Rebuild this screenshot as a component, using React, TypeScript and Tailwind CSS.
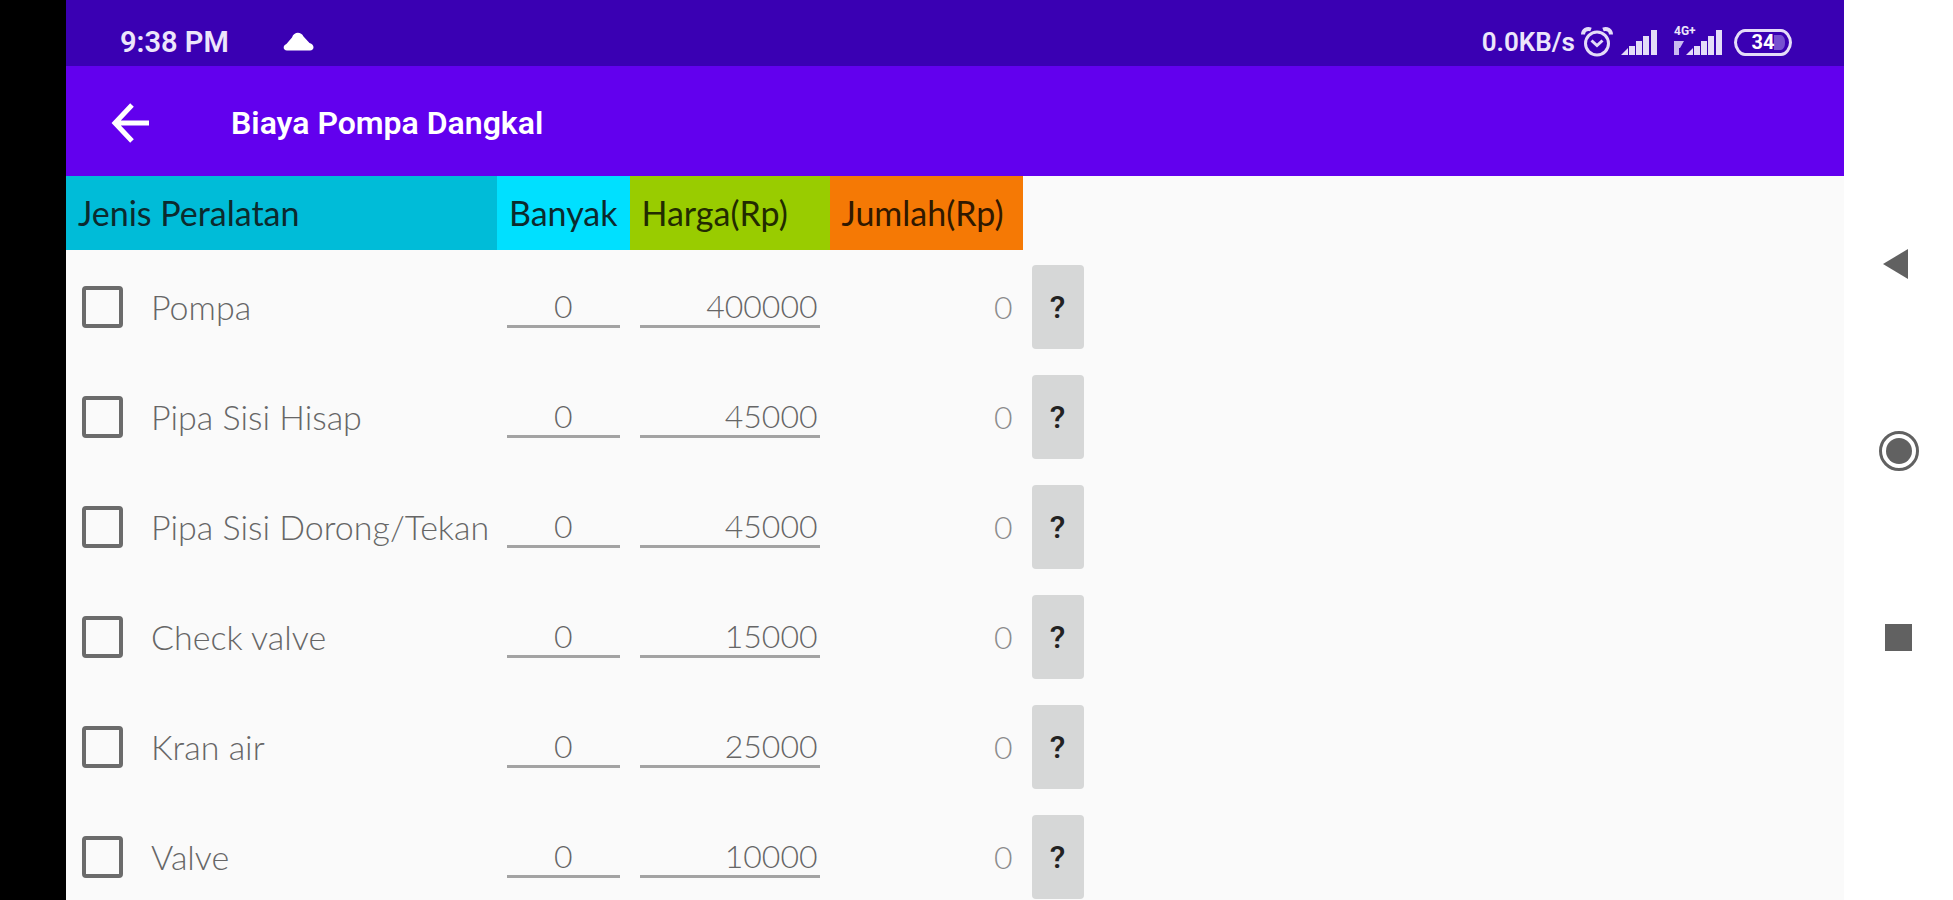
import React, { useState } from 'react';

interface Item {
  name: string;
  price: number;
}

const ITEMS: Item[] = [
  { name: 'Pompa', price: 400000 },
  { name: 'Pipa Sisi Hisap', price: 45000 },
  { name: 'Pipa Sisi Dorong/Tekan', price: 45000 },
  { name: 'Check valve', price: 15000 },
  { name: 'Kran air', price: 25000 },
  { name: 'Valve', price: 10000 },
];

const SignalBars = () => (
  <svg width="37" height="26" viewBox="0 0 37 26" fill="#e4dcf8">
    <path d="M0 26 7 19v7z" />
    <rect x="8" y="17" width="6" height="9" />
    <rect x="15" y="12" width="6" height="14" />
    <rect x="22" y="7" width="6" height="19" />
    <rect x="30" y="1" width="6" height="25" />
  </svg>
);

const StatusBar = () => (
  <div className="flex h-[66px] items-center justify-between bg-[#3a00b3] pl-[54px] pr-[51px] pt-[18px] font-[Roboto,sans-serif] text-[#ece6fb]">
    <div className="flex items-center gap-[54px]">
      <span className="text-[29px] font-semibold leading-8">9:38 PM</span>
      <svg width="31" height="20" viewBox="0 0 31 20" fill="#fff">
        <path d="M4 18.500C0 18.500-.6 13.500 3.400 12L9 5.500C11-.5 18-.5 20.500 4.500L26.500 11C32 12.500 31.500 18.500 27 18.500z" />
      </svg>
    </div>
    <div className="flex items-center">
      <span className="text-[26px] font-semibold leading-8">0.0KB/s</span>
      <svg className="ml-1.5" width="32" height="32" viewBox="0 0 32 32" fill="none" stroke="#e4dcf8" strokeWidth="3">
        <circle cx="16" cy="17.500" r="11.500" />
        <path d="M10.500 14.500 16 19.500l5.500-5" />
        <path d="M2 8.500C2 4 6 2 10 3.500M30 8.500C30 4 26 2 22 3.500" strokeWidth="4" />
      </svg>
      <span className="ml-2">
        <SignalBars />
      </span>
      <div className="relative ml-7">
        <SignalBars />
        <span className="absolute -left-3 -top-1 text-xs font-bold leading-3">4G+</span>
        <svg className="absolute -left-3 top-3" width="10" height="14" viewBox="0 0 10 14" fill="#c9bbf0">
          <path d="M0 0h10L6 7H5v7H0z" />
        </svg>
      </div>
      <div className="relative ml-2.5 flex h-[29px] w-[60px] items-center justify-center">
        <svg className="absolute inset-0" width="60" height="29" viewBox="0 0 60 29" fill="none">
          <path d="M12 2.500h36c5 0 9.500 6.500 9.500 12s-4.500 12-9.500 12H12c-5 0-9.500-6.500-9.500-12S7 2.500 12 2.500z" stroke="#e4dcf8" strokeWidth="3" />
          <path d="M41 7h7c3 1 4 4 4 7.500S51 21 48 22h-7z" fill="#7650d0" />
        </svg>
        <span className="relative text-xl font-bold leading-6 text-white">34</span>
      </div>
    </div>
  </div>
);

const AppBar = () => (
  <header className="flex h-[110px] items-center bg-[#6200ee] pl-[45px] pt-1 font-[Roboto,sans-serif] text-white">
    <button type="button" aria-label="Kembali" className="mr-[82px]">
      <svg width="38" height="40" viewBox="0 0 38 40" fill="none" stroke="currentColor" strokeWidth="5">
        <path d="M38 20H4M21 2 4 20l17 18" />
      </svg>
    </button>
    <h1 className="text-[32px] font-semibold leading-10">Biaya Pompa Dangkal</h1>
  </header>
);

interface ItemRowProps {
  item: Item;
  id: string;
}

const ItemRow: React.FC<ItemRowProps> = ({ item, id }) => {
  const [count, setCount] = useState('0');
  const [price, setPrice] = useState(String(item.price));
  const total = (Number(count) || 0) * (Number(price) || 0);
  const field =
    'block h-[42px] w-full border-b-[3px] border-[#a3a3a3] bg-transparent outline-none focus:border-[#6200ee]';

  return (
    <tr className="h-[110px] text-[#666666]">
      <td className="pl-4 pt-1">
        <div className="flex items-center gap-7">
          <input
            id={id}
            type="checkbox"
            className="h-[42px] w-[41px] shrink-0 appearance-none rounded-sm border-4 border-[#6b6b6b] checked:bg-[#6200ee]"
          />
          <label htmlFor={id} className="whitespace-nowrap text-[34px]">
            {item.name}
          </label>
        </div>
      </td>
      <td className="px-2.5 pt-1">
        <input
          aria-label={`Banyak ${item.name}`}
          inputMode="numeric"
          value={count}
          onChange={(e) => setCount(e.target.value)}
          className={`${field} text-center`}
        />
      </td>
      <td className="px-2.5 pt-1">
        <input
          aria-label={`Harga ${item.name}`}
          inputMode="numeric"
          value={price}
          onChange={(e) => setPrice(e.target.value)}
          className={`${field} pr-0.5 text-right`}
        />
      </td>
      <td className="pr-2.5 pt-1 text-right text-[#8c8c8c]">{total}</td>
      <td className="pl-[9px] pt-1">
        <button
          type="button"
          aria-label={`Info ${item.name}`}
          className="block h-[84px] w-[52px] rounded bg-[#d6d7d7] font-[Roboto,sans-serif] text-[32px] font-medium text-[#222]"
        >
          ?
        </button>
      </td>
    </tr>
  );
};

const CostTable = () => (
  <table className="table-fixed border-collapse font-[Lato,sans-serif] text-[32px] font-light leading-10">
    <colgroup>
      <col className="w-[431px]" />
      <col className="w-[132px]" />
      <col className="w-[200px]" />
      <col className="w-[193px]" />
      <col className="w-[61px]" />
    </colgroup>
    <thead>
      <tr className="h-[74px] text-left text-[34px] text-[#0c2a2e]">
        <th className="bg-[#00bcd8] px-3 font-normal">Jenis Peralatan</th>
        <th className="bg-[#00e0ff] px-3 font-normal">Banyak</th>
        <th className="bg-[#99cc00] px-3 font-normal text-[#222b00]">Harga(Rp)</th>
        <th className="bg-[#f57905] px-3 font-normal text-[#301800]">Jumlah(Rp)</th>
        <td />
      </tr>
    </thead>
    <tbody>
      {ITEMS.map((item, i) => (
        <ItemRow key={item.name} item={item} id={`item-${i}`} />
      ))}
    </tbody>
  </table>
);

const NavBar = () => (
  <nav className="flex w-[109px] shrink-0 flex-col items-center gap-[147px] bg-white pt-[244px] text-[#616161]">
    <button type="button" aria-label="Back">
      <svg width="40" height="40" viewBox="0 0 40 40" fill="currentColor">
        <path d="M4 20 29 5v30z" />
      </svg>
    </button>
    <button type="button" aria-label="Home">
      <svg width="40" height="40" viewBox="0 0 40 40">
        <circle cx="20" cy="20" r="18.500" fill="none" stroke="currentColor" strokeWidth="3" />
        <circle cx="20" cy="20" r="13" fill="currentColor" />
      </svg>
    </button>
    <button type="button" aria-label="Recents">
      <svg width="40" height="40" viewBox="0 0 40 40" fill="currentColor">
        <rect x="6" y="6" width="27" height="27" />
      </svg>
    </button>
  </nav>
);

export default function App() {
  return (
    <div className="flex h-screen overflow-hidden bg-black pl-[66px]">
      <div className="flex min-w-0 flex-1 flex-col bg-[#fafafa]">
        <StatusBar />
        <AppBar />
        <main className="min-h-0 flex-1 overflow-auto [scrollbar-width:none]">
          <CostTable />
        </main>
      </div>
      <NavBar />
    </div>
  );
}
